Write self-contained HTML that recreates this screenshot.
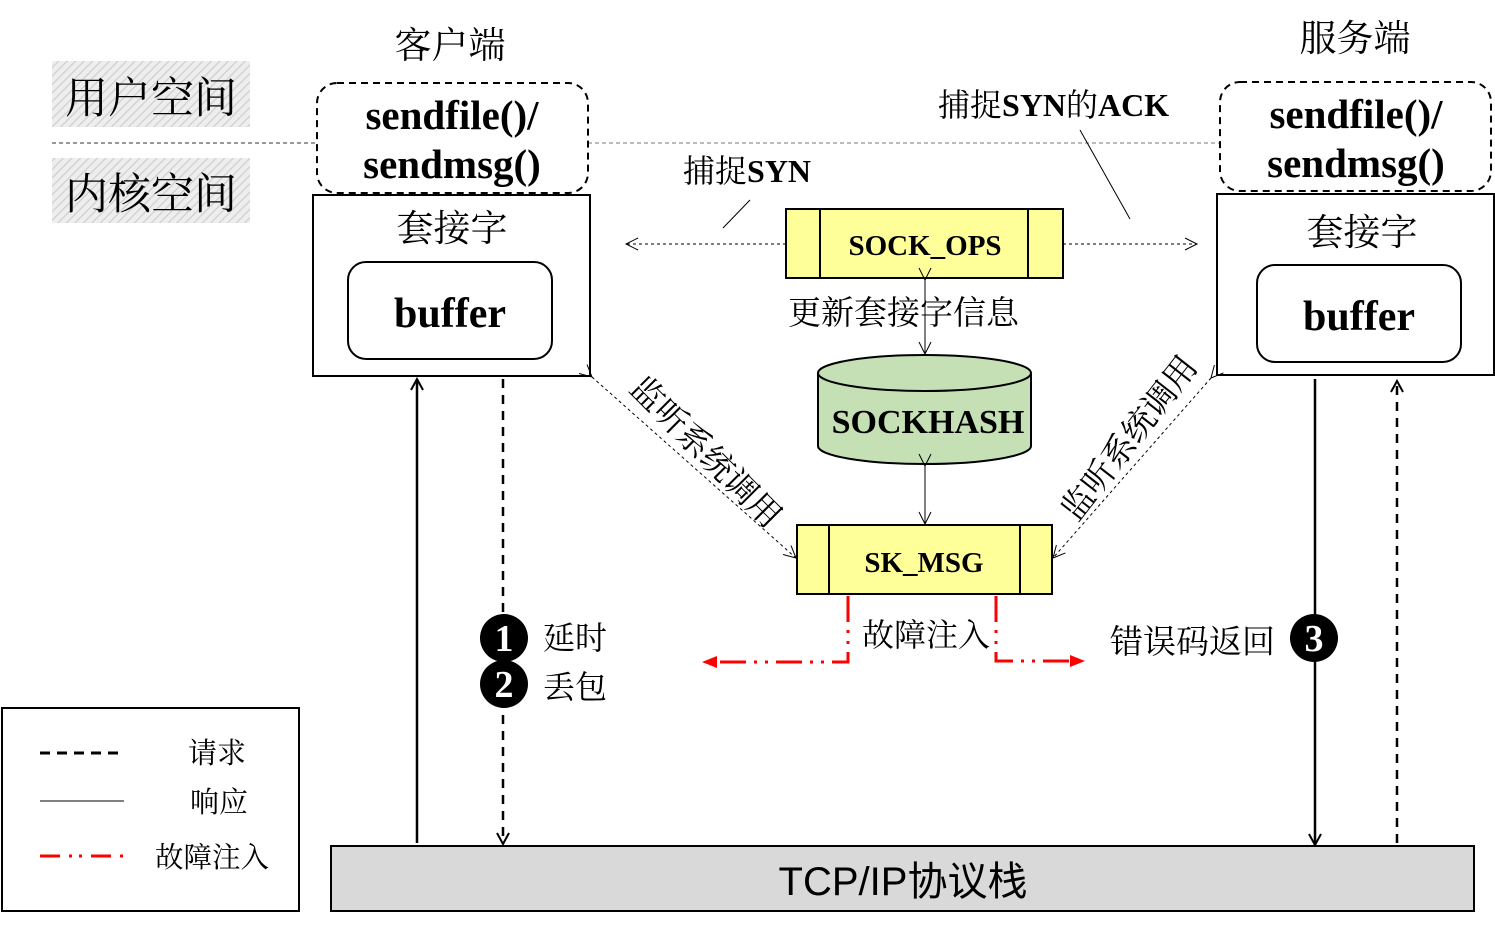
<!DOCTYPE html>
<html><head><meta charset="utf-8"><style>
html,body{margin:0;padding:0;background:#fff;}
svg{display:block;}
text{font-family:"Liberation Serif","Noto Serif CJK SC",serif;fill:#000;}
.b{font-weight:bold;}
</style></head><body>
<svg width="1495" height="930" viewBox="0 0 1495 930" xmlns="http://www.w3.org/2000/svg">
<defs>
<pattern id="h" width="6" height="6" patternUnits="userSpaceOnUse" patternTransform="rotate(45)">
<rect width="6" height="6" fill="#eeeeee"/><line x1="0" y1="0" x2="0" y2="6" stroke="#cfcfcf" stroke-width="2.5"/>
</pattern>
<marker id="oa" markerWidth="16" markerHeight="16" refX="13" refY="8" orient="auto" markerUnits="userSpaceOnUse"><path d="M1,2 L13,8 L1,14" fill="none" stroke="#000" stroke-width="1"/></marker>
<marker id="oa2" markerWidth="14" markerHeight="14" refX="12" refY="7" orient="auto" markerUnits="userSpaceOnUse"><path d="M1,1 L12,7 L1,13" fill="none" stroke="#000" stroke-width="2"/></marker>
<marker id="ra" markerWidth="16" markerHeight="14" refX="14" refY="7" orient="auto" markerUnits="userSpaceOnUse"><path d="M0,1 L15,7 L0,13z" fill="#f00"/></marker>
</defs>
<rect x="52" y="61" width="198" height="66" fill="url(#h)"/>
<rect x="52" y="158" width="198" height="65" fill="url(#h)"/>
<text x="151" y="113" font-size="43" text-anchor="middle">用户空间</text>
<text x="151" y="209" font-size="43" text-anchor="middle">内核空间</text>
<line x1="52" y1="143" x2="317" y2="143" stroke="#333" stroke-dasharray="4,3"/>
<line x1="588" y1="143" x2="1220" y2="143" stroke="#777" stroke-dasharray="4,3"/>
<text x="450" y="58" font-size="37" text-anchor="middle">客户端</text>
<text x="1355" y="51" font-size="37" text-anchor="middle">服务端</text>
<rect x="317" y="83" width="271" height="110" rx="20" fill="none" stroke="#000" stroke-width="2" stroke-dasharray="7,5"/>
<text class="b" x="452" y="129" font-size="41" text-anchor="middle">sendfile()/</text>
<text class="b" x="452" y="178" font-size="41" text-anchor="middle">sendmsg()</text>
<rect x="313" y="195" width="277" height="181" fill="none" stroke="#000" stroke-width="2"/>
<text x="452" y="241" font-size="37" text-anchor="middle">套接字</text>
<rect x="348" y="262" width="204" height="97" rx="18" fill="none" stroke="#000" stroke-width="2"/>
<text class="b" x="450" y="327" font-size="42" text-anchor="middle">buffer</text>
<rect x="1220" y="82" width="271" height="109" rx="20" fill="none" stroke="#000" stroke-width="2" stroke-dasharray="7,5"/>
<text class="b" x="1356" y="128" font-size="41" text-anchor="middle">sendfile()/</text>
<text class="b" x="1356" y="177" font-size="41" text-anchor="middle">sendmsg()</text>
<rect x="1217" y="194" width="277" height="181" fill="none" stroke="#000" stroke-width="2"/>
<text x="1362" y="245" font-size="37" text-anchor="middle">套接字</text>
<rect x="1257" y="265" width="204" height="97" rx="18" fill="none" stroke="#000" stroke-width="2"/>
<text class="b" x="1359" y="330" font-size="42" text-anchor="middle">buffer</text>
<text x="683" y="182" font-size="32">捕捉<tspan class="b">SYN</tspan></text>
<line x1="723" y1="228" x2="750" y2="200" stroke="#000"/>
<text x="938" y="116" font-size="32">捕捉<tspan class="b">SYN</tspan>的<tspan class="b">ACK</tspan></text>
<line x1="1080" y1="130" x2="1130" y2="219" stroke="#000"/>
<line x1="786" y1="244" x2="626" y2="244" stroke="#000" stroke-dasharray="3,3" marker-end="url(#oa)"/>
<line x1="1063" y1="244" x2="1197" y2="244" stroke="#000" stroke-dasharray="3,3" marker-end="url(#oa)"/>
<rect x="786" y="209" width="277" height="69" fill="#ffff99" stroke="#000" stroke-width="2"/>
<line x1="820" y1="209" x2="820" y2="278" stroke="#000" stroke-width="2"/>
<line x1="1028" y1="209" x2="1028" y2="278" stroke="#000" stroke-width="2"/>
<text class="b" x="925" y="255" font-size="29" text-anchor="middle">SOCK_OPS</text>
<line x1="925" y1="280" x2="925" y2="354" stroke="#000" marker-end="url(#oa)" marker-start="url(#oa)"/>
<text x="788" y="324" font-size="33">更新套接字信息</text>
<path d="M818,373 L818,446 A106.5,18 0 0 0 1031,446 L1031,373" fill="#c5e0b4" stroke="#000" stroke-width="2"/>
<ellipse cx="924.5" cy="373" rx="106.5" ry="18" fill="#c5e0b4" stroke="#000" stroke-width="2"/>
<text class="b" x="928" y="433" font-size="34" text-anchor="middle">SOCKHASH</text>
<line x1="925" y1="466" x2="925" y2="524" stroke="#000" marker-end="url(#oa)" marker-start="url(#oa)"/>
<line x1="592" y1="377" x2="796" y2="558" stroke="#000" stroke-dasharray="3,3" marker-end="url(#oa)" marker-start="url(#oa)"/>
<line x1="1211" y1="378" x2="1053" y2="558" stroke="#000" stroke-dasharray="3,3" marker-end="url(#oa)" marker-start="url(#oa)"/>
<rect x="797" y="525" width="255" height="69" fill="#ffff99" stroke="#000" stroke-width="2"/>
<line x1="829" y1="525" x2="829" y2="594" stroke="#000" stroke-width="2"/>
<line x1="1020" y1="525" x2="1020" y2="594" stroke="#000" stroke-width="2"/>
<text class="b" x="924" y="572" font-size="29" text-anchor="middle">SK_MSG</text>
<text x="0" y="0" font-size="33" text-anchor="middle" transform="translate(698,460) rotate(45)">监听系统调用</text>
<text x="0" y="0" font-size="33" text-anchor="middle" transform="translate(1138,445) rotate(-52)">监听系统调用</text>
<path d="M848,596 L848,662 L703,662" fill="none" stroke="#f00" stroke-width="3" stroke-dasharray="26,8,3,8,3,8" marker-end="url(#ra)"/>
<path d="M996,596 L996,661 L1084,661" fill="none" stroke="#f00" stroke-width="3" stroke-dasharray="26,8,3,8,3,8" marker-end="url(#ra)"/>
<text x="862" y="646" font-size="32">故障注入</text>
<line x1="417" y1="843" x2="417" y2="379" stroke="#000" stroke-width="2.5" marker-end="url(#oa2)"/>
<line x1="503" y1="379" x2="503" y2="844" stroke="#000" stroke-width="2.5" stroke-dasharray="9,7" marker-end="url(#oa2)"/>
<circle cx="504" cy="638" r="24" fill="#000"/>
<circle cx="504" cy="684" r="24" fill="#000"/>
<text class="b" x="504" y="651" font-size="38" text-anchor="middle" style="fill:#fff">1</text>
<text class="b" x="504" y="697" font-size="38" text-anchor="middle" style="fill:#fff">2</text>
<text x="543" y="649" font-size="32">延时</text>
<text x="543" y="698" font-size="32">丢包</text>
<line x1="1315" y1="379" x2="1315" y2="845" stroke="#000" stroke-width="2.5" marker-end="url(#oa2)"/>
<line x1="1397" y1="843" x2="1397" y2="381" stroke="#000" stroke-width="2.5" stroke-dasharray="9,7" marker-end="url(#oa2)"/>
<circle cx="1314" cy="638" r="24" fill="#000"/>
<text class="b" x="1314" y="651" font-size="38" text-anchor="middle" style="fill:#fff">3</text>
<text x="1110" y="653" font-size="33">错误码返回</text>
<rect x="331" y="846" width="1143" height="65" fill="#d9d9d9" stroke="#000" stroke-width="2"/>
<text x="903" y="895" font-size="40" text-anchor="middle" style="font-family:'Liberation Sans','Noto Sans CJK SC',sans-serif">TCP/IP协议栈</text>
<rect x="2" y="708" width="297" height="203" fill="#fff" stroke="#000" stroke-width="2"/>
<line x1="40" y1="753" x2="122" y2="753" stroke="#000" stroke-width="3" stroke-dasharray="10,7"/>
<line x1="40" y1="801" x2="124" y2="801" stroke="#000" stroke-width="1"/>
<line x1="40" y1="856" x2="124" y2="856" stroke="#f00" stroke-width="3" stroke-dasharray="20,9,3,7,3,9"/>
<text x="188" y="763" font-size="29">请求</text>
<text x="190" y="812" font-size="29">响应</text>
<text x="155" y="867" font-size="28.5">故障注入</text>
</svg>
</body></html>
